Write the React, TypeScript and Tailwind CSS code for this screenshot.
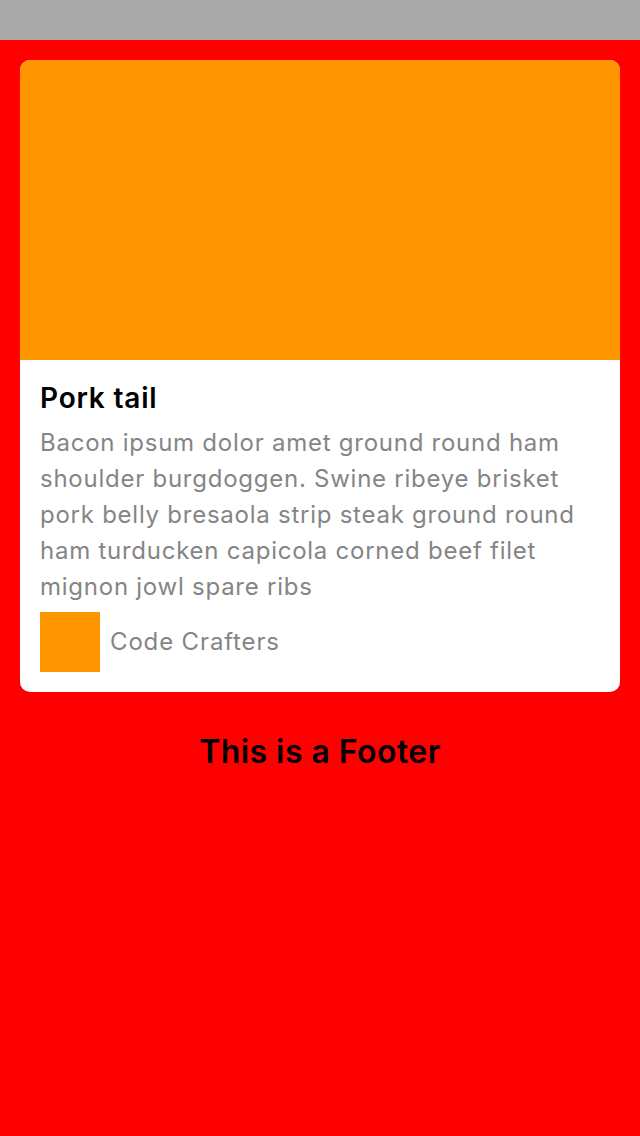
import React from "react";

export default function App() {
  return (
    <div className="w-[640px] h-[1136px] bg-[#ff0000] flex flex-col" style={{ fontFamily: "Inter, 'Noto Sans', sans-serif" }}>
      <div className="h-[40px] bg-[#aaaaaa] shrink-0" />
      <div className="px-[20px] pt-[20px]">
        <div className="bg-white rounded-[10px] overflow-hidden">
          <div className="h-[300px] bg-[#ff9500]" />
          <div className="px-[20px] pt-[20px] pb-[20px]">
            <div className="text-[28px] leading-[36px] font-semibold tracking-[0.8px] text-black">Pork tail</div>
            <p className="mt-[9px] text-[24px] leading-[36px] tracking-[0.75px] text-[#858585]">
              Bacon ipsum dolor amet ground round ham shoulder burgdoggen. Swine ribeye brisket pork belly bresaola strip steak ground round ham turducken capicola corned beef filet mignon jowl spare ribs
            </p>
            <div className="mt-[7px] flex items-center">
              <div className="w-[60px] h-[60px] bg-[#ff9500]" />
              <span className="ml-[10px] text-[24px] leading-[36px] tracking-[0.85px] text-[#858585]">Code Crafters</span>
            </div>
          </div>
        </div>
      </div>
      <div className="mt-[40px] text-center text-[32px] leading-[40px] font-semibold tracking-[0.45px] text-black">This is a Footer</div>
    </div>
  );
}
